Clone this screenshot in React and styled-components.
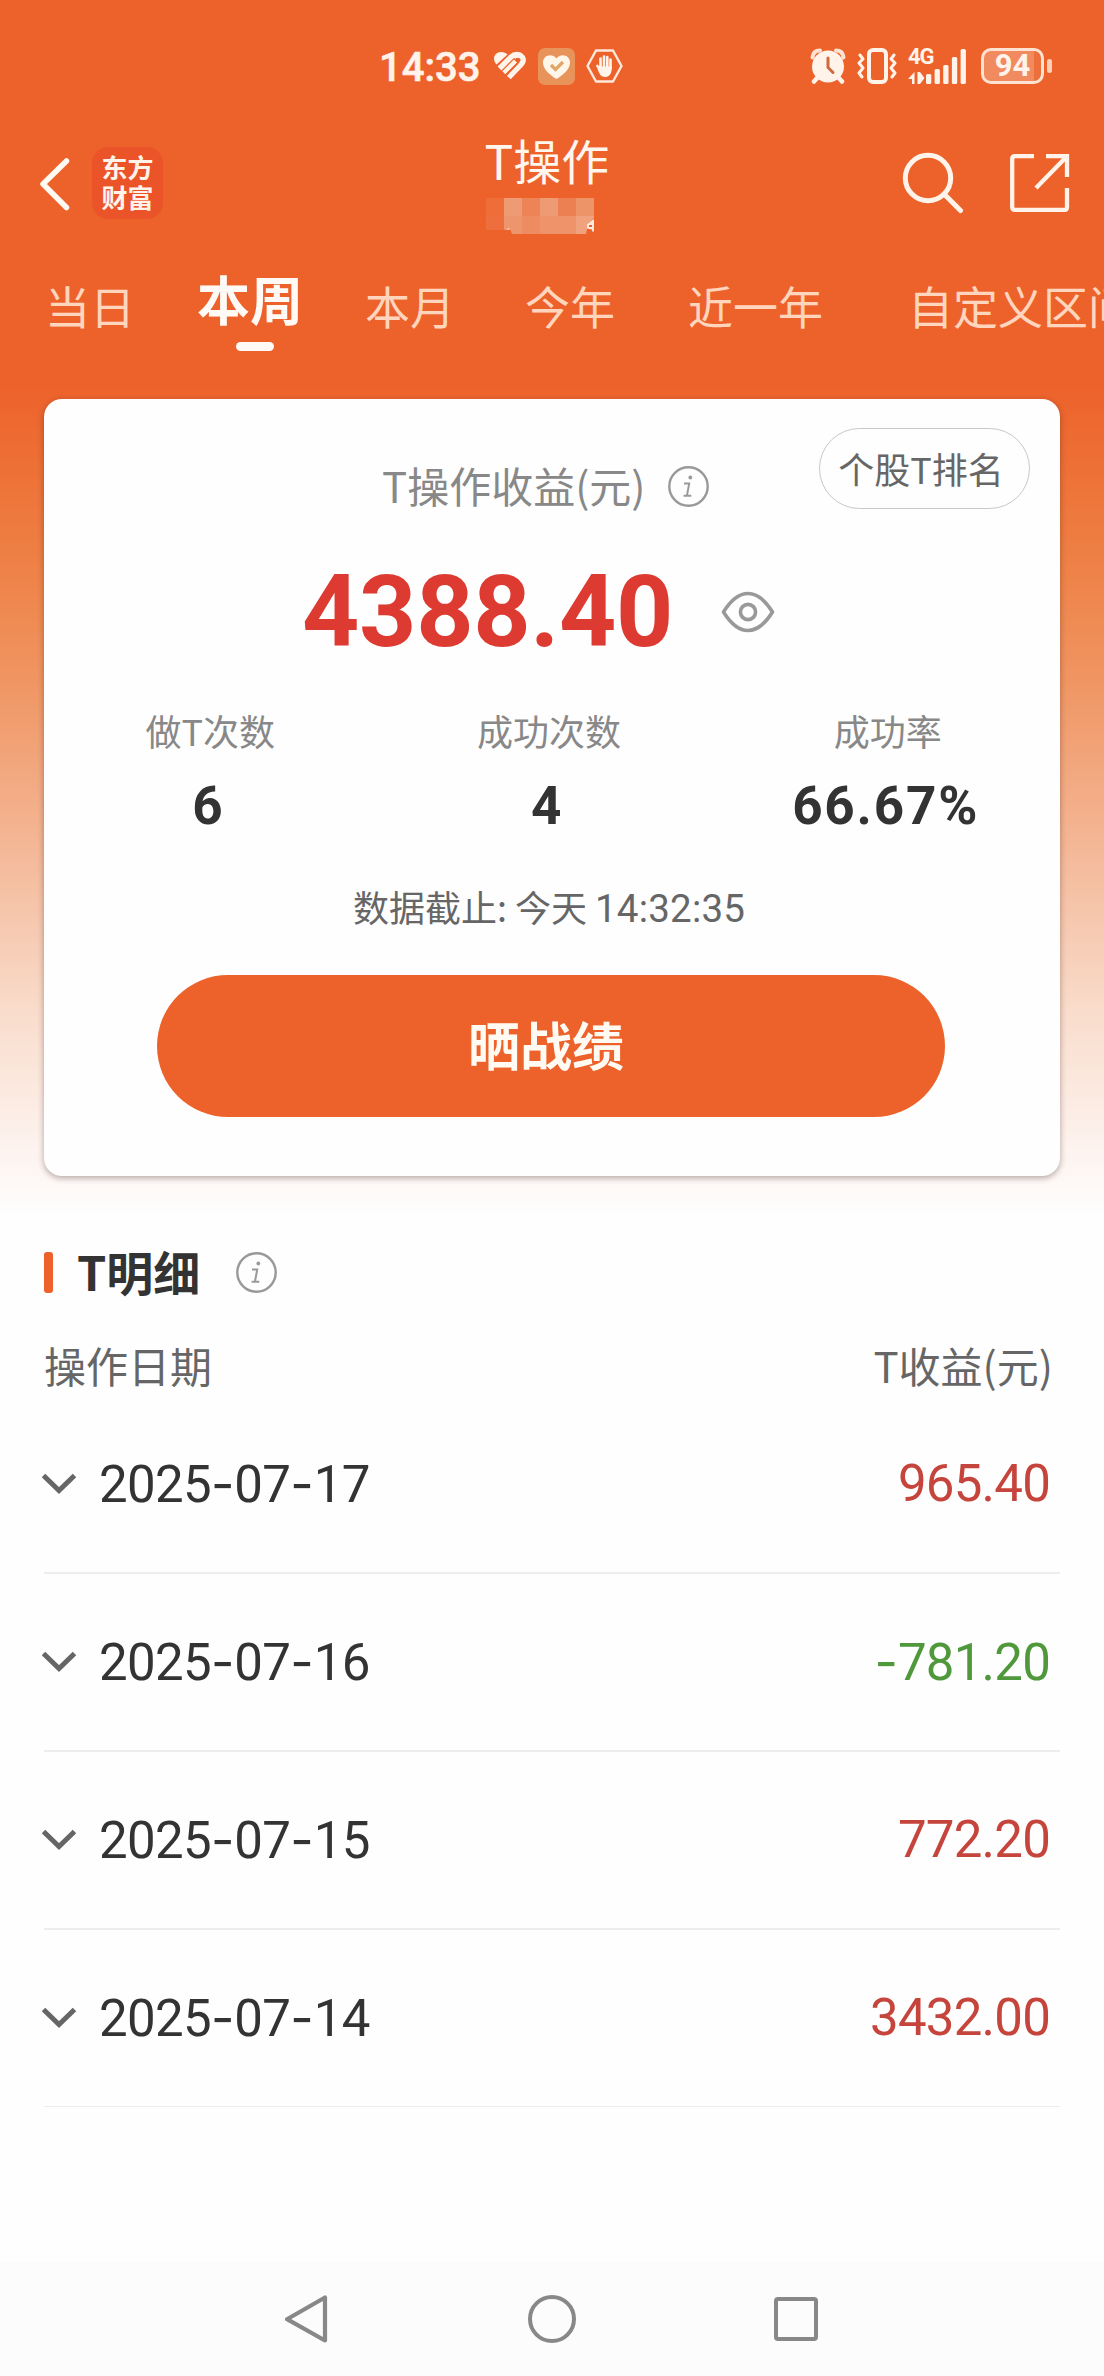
import React, { useState } from 'react'
import styled, { createGlobalStyle } from 'styled-components'

const GlobalStyle = createGlobalStyle`
	body {
		margin: 0;
		background: #fefefe;
		font-family: "Noto Sans CJK SC", sans-serif;
	}
	* {
		box-sizing: border-box;
	}
	svg {
		display: block;
		flex: none;
	}
`

const Page = styled.div`
	width: 1104px;
	height: 2376px;
	display: flex;
	flex-direction: column;
	overflow: hidden;
	background: linear-gradient(
		180deg,
		#ed622b 0,
		#ed622b 385px,
		#ee7d41 540px,
		#f09562 680px,
		#f4ba9b 860px,
		#f9dccb 1010px,
		#fdf3ef 1150px,
		#fefefe 1215px
	);
`

const StatusBar = styled.div`
	height: 132px;
	flex: none;
	display: flex;
	align-items: center;
	padding: 0 52px 0 379px;
`

const Clock = styled.span`
	width: 114px;
	font: 500 40px/50px Roboto, sans-serif;
	padding-top: 3px;
	color: #fff3ea;
	-webkit-text-stroke: 0.6px #fff3ea;
`

const StatusIcons = styled.div`
	display: flex;
	align-items: center;
	gap: ${props => props.$gap}px;
	margin-left: ${props => (props.$right ? 'auto' : 0)};
`

const Signal = styled.div`
	width: 59px;
	height: 36px;
	position: relative;
	margin-right: 3px;
`

const SignalLabel = styled.span`
	position: absolute;
	left: 0;
	top: 0;
	font: 700 22px/18px Roboto, sans-serif;
	letter-spacing: -1px;
	color: #fff3ea;
`

const Battery = styled.div`
	width: 63px;
	height: 36px;
	border: 3px solid #ffe3d2;
	border-radius: 10px;
	background: linear-gradient(90deg, #f28a60 0 88%, #ed6f3c 88%);
	display: flex;
	align-items: center;
	justify-content: center;
	font: 700 31px/32px Roboto, sans-serif;
	color: #fff3ea;
`

const BatteryTip = styled.span`
	width: 5px;
	height: 14px;
	margin-left: 3px;
	border-radius: 3px;
	background: #ffd0b8;
`

const BatteryWrap = styled.div`
	display: flex;
	align-items: center;
`

const Header = styled.div`
	height: 120px;
	flex: none;
	display: grid;
	grid-template-columns: 400px 1fr 400px;
`

const HeaderLeft = styled.div`
	display: flex;
	align-items: flex-start;
	gap: 20px;
	padding: 15px 0 0 36px;
`

const Logo = styled.div`
	width: 71px;
	height: 72px;
	padding: 5px 0;
	border-radius: 16px;
	background: #eb5428;
	color: #fff3ea;
	font-size: 26px;
	font-weight: 700;
	line-height: 30px;
	text-align: center;
`

const HeaderTitle = styled.div`
	display: flex;
	flex-direction: column;
	align-items: center;
	color: #fff6ee;
	font-size: 48px;
	line-height: 54px;
	padding-right: 10px;

	svg {
		margin: 8px 14px 0 0;
	}
`

const HeaderRight = styled.div`
	display: flex;
	align-items: flex-start;
	justify-content: flex-end;
	gap: 46px;
	padding: 20px 34px 0 0;
`

const Tabs = styled.div`
	height: 147px;
	flex: none;
	display: grid;
	grid-template-columns: 152px 168px 160px 163px 220px 240px;
	padding: 18px 0 0 45px;
`

const Tab = styled.div`
	font-size: ${props => (props.$active ? 53 : 45)}px;
	font-weight: ${props => (props.$active ? 700 : 400)};
	line-height: ${props => (props.$active ? 56 : 71)}px;
	color: ${props => (props.$active ? '#fffaf5' : '#ffd5bd')};
	white-space: nowrap;

	&::after {
		content: '';
		display: ${props => (props.$active ? 'block' : 'none')};
		width: 38px;
		height: 9px;
		margin: 16px 0 0 39px;
		border-radius: 5px;
		background: #fffaf5;
	}
`

const Card = styled.div`
	height: 777px;
	flex: none;
	margin: 0 44px;
	border-radius: 18px;
	background: #fefefe;
	box-shadow: 0 2px 6px rgba(60, 30, 20, 0.38);
	position: relative;
	display: flex;
	flex-direction: column;
	padding-top: 55px;
`

/* leży nad górnym prawym rogiem karty */
const RankButton = styled.button`
	position: absolute;
	top: 29px;
	right: 30px;
	width: 211px;
	height: 81px;
	padding: 0 7px 2px 0;
	border: 1px solid #c8c8c8;
	border-radius: 41px;
	background: none;
	color: #666;
	font-family: inherit;
	font-size: 36px;
	line-height: 76px;
	white-space: nowrap;
`

const CardTitle = styled.div`
	display: flex;
	align-items: center;
	gap: 22px;
	padding-left: 338px;
	height: 64px;
	font-size: 42px;
	line-height: 62px;
	color: #888;

	span {
		padding-bottom: 2px;
	}
`

const Total = styled.div`
	display: flex;
	align-items: center;
	height: 116px;
	margin-top: 36px;
	padding-left: 258px;
	font: 700 100px/116px Roboto, sans-serif;
	letter-spacing: -0.3px;
	color: #dd3b32;
	gap: 48px;
`

const Stats = styled.div`
	display: grid;
	grid-template-columns: repeat(3, 1fr);
	margin: 33px 3px 0 -3px;
	text-align: center;
`

const StatLabel = styled.div`
	font-size: 36px;
	line-height: 54px;
	color: #888;
`

const StatValue = styled.div`
	font: 700 53px/60px Roboto, sans-serif;
	letter-spacing: 1.8px;
	margin: 19px 4px 0 0;
	color: #333;
`

const Deadline = styled.div`
	margin-top: 42px;
	padding-right: 6px;
	height: 56px;
	font-size: 36px;
	line-height: 56px;
	text-align: center;
	color: #666;
`

const DeadlineTime = styled.span`
	font-family: Roboto, sans-serif;
	font-size: 38.5px;
	letter-spacing: 0.2px;
`

const ShareButton = styled.button`
	width: 788px;
	height: 142px;
	margin: 41px 0 0 113px;
	padding: 0 10px 6px 0;
	border: none;
	border-radius: 71px;
	background: #ed622b;
	color: #fffaf2;
	font-family: inherit;
	font-size: 52px;
	font-weight: 700;
`

const Details = styled.div`
	flex: 1;
	padding: 60px 44px 0;
`

const DetailsTitle = styled.div`
	display: flex;
	align-items: center;
	height: 72px;
	font-size: 47px;
	font-weight: 700;
	line-height: 72px;
	color: #333;

	&::before {
		content: '';
		width: 9px;
		height: 41px;
		margin-right: 24px;
		border-radius: 3px;
		background: #ed622b;
	}

	span {
		padding-bottom: 2px;
	}

	svg {
		margin-left: 36px;
	}
`

const ListHead = styled.div`
	display: flex;
	justify-content: space-between;
	height: 88px;
	padding: 25px 7px 0 0;
	font-size: 42px;
	line-height: 63px;
	color: #666;
`

const Row = styled.div`
	height: 178px;
	display: flex;
	align-items: center;
	padding-right: 10px;
	border-bottom: 2px solid #ededed;
	font: 400 51px/60px Roboto, sans-serif;

	&:last-child {
		border-bottom-width: 1px;
		height: 177px;
	}

	svg {
		margin: 0 22px 0 -3px;
	}
`

const RowDate = styled.span`
	flex: 1;
	color: #333;
	letter-spacing: -0.7px;
`

const Dash = styled.span`
	font-family: Inter, sans-serif;
	letter-spacing: 0;
`

const RowValue = styled.span`
	color: ${props => (props.$loss ? '#4f983c' : '#c5443c')};
	letter-spacing: -0.8px;
`

const NavBar = styled.div`
	height: 114px;
	flex: none;
	display: flex;
	align-items: center;
	justify-content: space-between;
	padding: 0 286px 0 283px;
	background: #fcfcfc;
`

const tabs = ['当日', '本周', '本月', '今年', '近一年', '自定义区间']

const stats = [
	{ label: '做T次数', value: '6' },
	{ label: '成功次数', value: '4' },
	{ label: '成功率', value: '66.67%' },
]

const records = [
	{ date: '2025-07-17', value: '965.40' },
	{ date: '2025-07-16', value: '-781.20' },
	{ date: '2025-07-15', value: '772.20' },
	{ date: '2025-07-14', value: '3432.00' },
]

const mosaic = [
	['#ee6d39', '#ee9a72', '#ec8457', '#ee9a74', '#ec8052', '#ee9469'],
	['#ee6f3d', '#ed966e', '#ed8c60', '#ee936a', '#ee936a', '#f0a27d'],
]

// Roboto ma za wąski łącznik, więc bierzemy go z Inter
const Num = ({ text }) => text.split('').map((c, i) => (c === '-' ? <Dash key={i}>-</Dash> : c))

const InfoIcon = () => (
	<svg width="41" height="41" viewBox="0 0 41 41" fill="none" stroke="#999">
		<circle cx="20.5" cy="20.5" r="19.2" strokeWidth="2.4" />
		<circle cx="22.3" cy="11.5" r="1.9" fill="#999" stroke="none" />
		<path d="M16 17.6h5.2l-2.3 12.2h4.4M15.6 29.8h4" strokeWidth="2" />
	</svg>
)

const Mosaic = () => (
	<svg width="120" height="42" viewBox="0 0 120 42">
		{mosaic.map((line, y) =>
			line.map((fill, x) => (
				<rect key={`${x}-${y}`} x={x * 18 + 6} y={y * 18 + 4} width="18" height={y && !x ? 14 : 18} fill={fill} />
			))
		)}
		<path d="M24 36l3-1 3 0 2 5h-8zM114 24l-6 6-2 10h8z" fill="#ed622b" />
		<path d="M107 34.5v-4l6-5h1v12h-2v-2zM109 31v2h3v-2z" fill="#ffe9dc" fillRule="evenodd" />
		<path d="M25 35.8l4-1.6 1 1.4z" fill="#ffe9dc" />
	</svg>
)

const App = () => {
	const [active, setActive] = useState('本周')

	return (
		<Page>
			<GlobalStyle />
			<StatusBar>
				<Clock>14:33</Clock>
				<StatusIcons $gap={11}>
					<svg width="34" height="30" viewBox="0 0 34 30">
						<path d="M3.500 13.500C-1.500 8 1.500 1 8 1c3 0 5 1 6.500 2.500z" fill="#fff3ea" />
						<g stroke="#fff3ea" strokeWidth="5.400" fill="none">
							<path d="M6.500 17.500L18 6q5-4.500 9.500-1" />
							<path d="M13 23.500L24.500 11" strokeWidth="0" />
							<path d="M15.800 26.500L28.500 13Q32.500 8 27.500 4.500Q24 2.500 20.500 6" />
							<path d="M10.800 21.800L22.500 10" strokeWidth="4.200" />
						</g>
						<path d="M13.300 24.200L25 12" stroke="#ed622b" strokeWidth="1.300" />
					</svg>
					<svg width="37" height="37" viewBox="0 0 37 37">
						<rect width="37" height="37" rx="7" fill="#e8935a" />
						<path d="M18.5 31C12 27 5 21.500 5 14.500C5 7 14 4.500 18.500 10.500C23 4.500 32 7 32 14.500C32 21.500 25 27 18.500 31Z" fill="#fff6ea" />
						<path d="M13 17l4.500 4.500L25 14" fill="none" stroke="#e2a568" strokeWidth="3.200" />
					</svg>
					<svg width="37" height="34" viewBox="0 0 37 34">
						<path d="M10 1.500h17L35.500 17 27 32.500H10L1.500 17z" fill="none" stroke="#ffe9dc" strokeWidth="2.400" strokeLinejoin="round" />
						<g stroke="#fff3ea" strokeLinecap="round" strokeWidth="2.600">
							<path d="M14.500 9.500V19M18 7.500V19M21.300 8V19M24.500 10.500V19M11.300 17l3.200 4" />
						</g>
						<path d="M12.500 17.500h13.300c.3 5-1.300 10.500-6.600 10.500s-6-4.500-7.700-8z" fill="#fff3ea" />
					</svg>
				</StatusIcons>
				<StatusIcons $gap={11} $right>
					<svg width="36" height="36" viewBox="0 0 36 36">
						<path d="M2.500 9.500Q3 2.500 10 2.500M26 2.500Q33 2.500 33.500 9.500" fill="none" stroke="#ffe3d2" strokeWidth="4" strokeLinecap="round" />
						<path d="M8 29l-4 4.500M28 29l4 4.500" stroke="#fff3ea" strokeWidth="4.500" strokeLinecap="round" />
						<circle cx="18" cy="18.500" r="16" fill="#fff3ea" />
						<path d="M18 10v9.500l5 5" fill="none" stroke="#cf6a3f" strokeWidth="3" strokeLinecap="round" />
					</svg>
					<svg width="40" height="36" viewBox="0 0 40 36" fill="none" stroke="#fff3ea">
						<rect x="12" y="2" width="17" height="32" rx="4" strokeWidth="4" />
						<path d="M3 7l3 4-4 4 4 5-4 5 3 4M37 7l-3 4 4 4-4 5 4 5-3 4" strokeWidth="3" strokeLinecap="round" strokeLinejoin="round" />
					</svg>
					<Signal>
						<SignalLabel>4G</SignalLabel>
						<svg width="59" height="36" viewBox="0 0 59 36" fill="#fff3ea">
							<rect x="18" y="26" width="5.300" height="10" rx="1.500" />
							<rect x="26.600" y="21" width="5.300" height="15" rx="1.500" />
							<rect x="35.200" y="17" width="5.300" height="19" rx="1.500" />
							<rect x="43.900" y="9" width="5.300" height="27" rx="1.500" />
							<rect x="52.600" y="1" width="5.300" height="35" rx="1.500" />
							<path d="M0 31l6.500-7v12H4v-5zM9.500 24h2.500l4.500 6-4.500 6H9.500z" />
						</svg>
					</Signal>
					<BatteryWrap>
						<Battery>94</Battery>
						<BatteryTip />
					</BatteryWrap>
				</StatusIcons>
			</StatusBar>

			<Header>
				<HeaderLeft>
					<svg width="36" height="72" viewBox="0 0 36 72" fill="none" stroke="#fffaf2" strokeWidth="5.500" strokeLinecap="round" strokeLinejoin="round">
						<path d="M30.500 14L7 37l23.500 23.500" />
					</svg>
					<Logo>东方<br />财富</Logo>
				</HeaderLeft>
				<HeaderTitle>
					T操作
					<Mosaic />
				</HeaderTitle>
				<HeaderRight>
					<svg width="64" height="64" viewBox="0 0 64 64" fill="none" stroke="#fff3ea" strokeWidth="5">
						<circle cx="28" cy="26" r="22.700" />
						<path d="M44 42l16.500 16.500" strokeLinecap="round" />
					</svg>
					<svg width="60" height="62" viewBox="0 0 60 62" fill="none" stroke="#fff3ea" strokeWidth="4.300">
						<path d="M24 4.200H5Q2.200 4.200 2.200 7v48q0 2.800 2.800 2.800h49.800q2.200 0 2.200-2.800V36" />
						<path d="M36 4.200h21V25M56.500 4.700L26 36" />
					</svg>
				</HeaderRight>
			</Header>

			<Tabs>
				{tabs.map(tab => (
					<Tab key={tab} $active={tab === active} onClick={() => setActive(tab)}>
						{tab}
					</Tab>
				))}
			</Tabs>

			<Card>
				<RankButton>个股T排名</RankButton>
				<CardTitle>
					<span>T操作收益(元)</span>
					<InfoIcon />
				</CardTitle>
				<Total>
					4388.40
					<svg width="54" height="42" viewBox="0 0 54 42" fill="none" stroke="#999" strokeWidth="3.600">
						<path d="M2.500 21Q14 2.500 27 2.500T51.500 21Q40 39.500 27 39.500T2.500 21z" strokeLinejoin="round" />
						<circle cx="27" cy="21" r="7.600" />
					</svg>
				</Total>
				<Stats>
					{stats.map(item => (
						<div key={item.label}>
							<StatLabel>{item.label}</StatLabel>
							<StatValue>{item.value}</StatValue>
						</div>
					))}
				</Stats>
				<Deadline>
					数据截止: 今天 <DeadlineTime>14:32:35</DeadlineTime>
				</Deadline>
				<ShareButton>晒战绩</ShareButton>
			</Card>

			<Details>
				<DetailsTitle>
					<span>T明细</span>
					<InfoIcon />
				</DetailsTitle>
				<ListHead>
					<span>操作日期</span>
					<span>T收益(元)</span>
				</ListHead>
				<div>
					{records.map(item => (
						<Row key={item.date}>
							<svg width="36" height="22" viewBox="0 0 36 22" fill="none" stroke="#666" strokeWidth="5">
								<path d="M2.500 2.500L18 17.500 33.500 2.500" />
							</svg>
							<RowDate>
								<Num text={item.date} />
							</RowDate>
							<RowValue $loss={item.value.startsWith('-')}>
								<Num text={item.value} />
							</RowValue>
						</Row>
					))}
				</div>
			</Details>

			<NavBar>
				<svg width="46" height="52" viewBox="0 0 46 52" fill="none" stroke="#888" strokeWidth="4.200" strokeLinejoin="round">
					<path d="M42 4.500v43L4 26.200z" />
				</svg>
				<svg width="48" height="48" viewBox="0 0 48 48" fill="none" stroke="#888" strokeWidth="4">
					<circle cx="24" cy="24" r="22" />
				</svg>
				<svg width="44" height="44" viewBox="0 0 44 44" fill="none" stroke="#888" strokeWidth="4">
					<rect x="2" y="2" width="40" height="40" rx="2" />
				</svg>
			</NavBar>
		</Page>
	)
}

export default App
